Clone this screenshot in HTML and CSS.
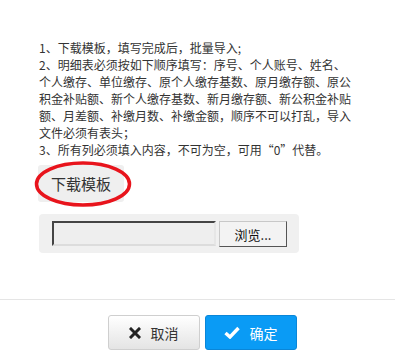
FILE: index.html
```html
<!DOCTYPE html>
<html lang="zh">
<head>
<meta charset="utf-8">
<link rel="stylesheet" href="styles.css">
</head>
<body>
<div class="dialog">
  <div class="content">
    <p class="notes">1、下载模板，填写完成后，批量导入;<br>2、明细表必须按如下顺序填写：序号、个人账号、姓名、<br>个人缴存、单位缴存、原个人缴存基数、原月缴存额、原公<br>积金补贴额、新个人缴存基数、新月缴存额、新公积金补贴<br>额、月差额、补缴月数、补缴金额，顺序不可以打乱，导入<br>文件必须有表头；<br>3、所有列必须填入内容，不可为空，可用“0”代替。</p>
    <div class="download-wrap">
      <span class="download">下载模板</span>
      <svg class="circle" width="100" height="50" viewBox="0 0 100 50"><ellipse cx="50" cy="24" rx="46.5" ry="21" fill="none" stroke="#e8141c" stroke-width="3.5"/></svg>
    </div>
    <div class="file-box">
      <span class="file-input"></span>
      <span class="browse">浏览...</span>
    </div>
  </div>
  <div class="footer">
    <button class="btn btn-cancel"><svg class="ico" width="12" height="12" viewBox="0 0 12 12"><path d="M2 2 L10 10 M10 2 L2 10" stroke="#222" stroke-width="3" stroke-linecap="square"/></svg>取消</button>
    <button class="btn btn-ok"><svg class="ico" width="16" height="13" viewBox="0 0 16 13"><path d="M1.5 7 L6 11 L14.5 2" fill="none" stroke="#fff" stroke-width="3.4" stroke-linejoin="miter"/></svg>确定</button>
  </div>
</div>
</body>
</html>
```
FILE: styles.css
```css
* { box-sizing: border-box; }
html, body { margin: 0; padding: 0; background: #fff; }
body {
  width: 395px;
  height: 363px;
  overflow: hidden;
  font-family: "Noto Sans CJK SC", "Noto Sans", sans-serif;
  color: #333;
}
.content {
  padding: 39px 0 0 39px;
  height: 299px;
}
.notes {
  margin: 0;
  font-size: 12px;
  line-height: 17px;
  white-space: nowrap;
  color: #333;
}
.download-wrap {
  position: relative;
  margin-top: 7px;
  display: flex;
}
.download {
  display: flex;
  align-items: center;
  justify-content: center;
  width: 86px;
  height: 37px;
  background: #efefef;
  border-radius: 3px;
  font-size: 15px;
  color: #333;
  margin-left: -1px;
}
.circle {
  position: absolute;
  left: -6px;
  top: -5px;
}
.file-box {
  margin-top: 12px;
  width: 260px;
  height: 39px;
  background: #f0f0f0;
  border-radius: 4px;
  display: flex;
  align-items: flex-start;
  padding: 7px 0 0 13px;
  gap: 3px;
}
.file-input {
  width: 164px;
  height: 25px;
  background: #eeeeee;
  border-top: 2px solid #444;
  border-left: 2px solid #444;
  border-bottom: 2px solid #dcdcdc;
  border-right: 2px solid #e6e6e6;
}
.browse {
  width: 68px;
  height: 26px;
  background: #f3f3f3;
  border: 1px solid #c8c8c8;
  border-right-color: #555;
  border-bottom-color: #555;
  font-size: 13px;
  font-family: "Noto Sans CJK SC", sans-serif;
  color: #111;
  display: flex;
  align-items: center;
  justify-content: center;
  line-height: 1;
}
.footer {
  border-top: 1px solid #e5e5e5;
  display: flex;
  justify-content: center;
  gap: 5px;
  padding: 15px 0 0 9px;
}
.btn {
  width: 92px;
  height: 35px;
  border-radius: 3px;
  font-family: "Noto Sans CJK SC", sans-serif;
  font-size: 14px;
  display: flex;
  align-items: center;
  justify-content: center;
  gap: 10px;
  padding: 0;
  cursor: pointer;
}
.btn-cancel {
  background: linear-gradient(#ffffff, #e4e4e4);
  border: 1px solid #cfcfcf;
  color: #333;
}
.btn-ok {
  background: #0a9bf5;
  border: 1px solid #0a86d8;
  color: #fff;
}
.ico { display: block; }
```
